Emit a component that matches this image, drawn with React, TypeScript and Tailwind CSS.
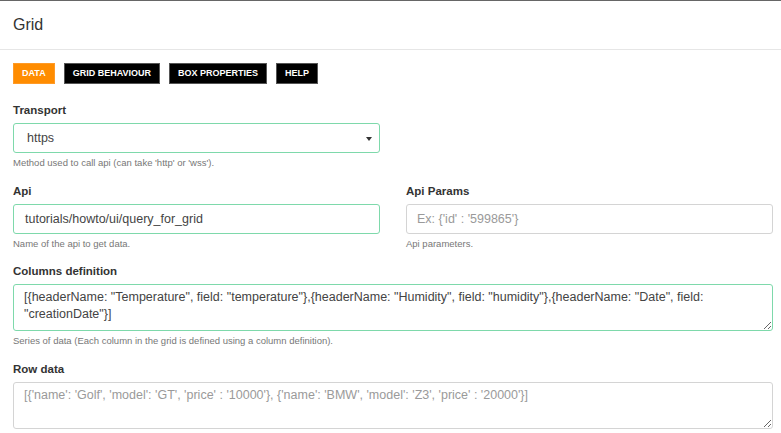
import React from "react";

const font = { fontFamily: '"Liberation Sans", Arial, sans-serif' };

function Label({ children }: { children: React.ReactNode }) {
  return <div className="text-[11.5px] leading-[16px] font-bold text-[#333] mb-[5px]">{children}</div>;
}

function Help({ children }: { children: React.ReactNode }) {
  return <div className="text-[9.5px] leading-[12px] text-[#777] mt-[4px]">{children}</div>;
}

export default function App() {
  const tabs = [
    { name: "DATA", active: true },
    { name: "GRID BEHAVIOUR" },
    { name: "BOX PROPERTIES" },
    { name: "HELP" },
  ];
  return (
    <div className="w-[781px] h-[433px] bg-white overflow-hidden border-t border-[#666]" style={font}>
      <div className="h-[49px] flex items-center px-[13px] border-b border-[#e6e6e6]">
        <span className="text-[16px] text-[#333]">Grid</span>
      </div>
      <div className="px-[13px] pt-[13px]">
        <div className="flex gap-[9px]">
          {tabs.map((t) => (
            <div
              key={t.name}
              className={
                "h-[21px] px-[8px] flex items-center text-[9px] font-bold text-white border " +
                (t.active ? "bg-[#ff8c00] border-[#ff9a26]" : "bg-black border-[#555]")
              }
            >
              {t.name}
            </div>
          ))}
        </div>

        <div className="mt-[18px] w-[367px]">
          <Label>Transport</Label>
          <div className="relative h-[30px] rounded-[3px] border border-[#7ed9ab] flex items-center pl-[13px] text-[12.5px] text-[#444]">
            https
            <svg className="absolute right-[7px] top-[13px]" width="6" height="4" viewBox="0 0 6 4">
              <path d="M0 0 L6 0 L3 4 Z" fill="#333" />
            </svg>
          </div>
          <Help>Method used to call api (can take 'http' or 'wss').</Help>
        </div>

        <div className="mt-[14px] grid grid-cols-[367px_367px] gap-x-[26px]">
          <div>
            <Label>Api</Label>
            <div className="h-[30px] rounded-[3px] border border-[#7ed9ab] flex items-center pl-[11px] text-[12.5px] text-[#444]">
              tutorials/howto/ui/query_for_grid
            </div>
            <Help>Name of the api to get data.</Help>
          </div>
          <div>
            <Label>Api Params</Label>
            <div className="h-[30px] rounded-[3px] border border-[#d4d4d4] flex items-center pl-[10px] text-[12.5px] text-[#9a9a9a]">
              Ex: {"{'id' : '599865'}"}
            </div>
            <Help>Api parameters.</Help>
          </div>
        </div>

        <div className="mt-[13px] w-[760px]">
          <Label>Columns definition</Label>
          <textarea
            readOnly
            className="block w-full h-[47px] rounded-[3px] border border-[#7ed9ab] px-[10px] pt-[4px] text-[12.5px] leading-[17px] text-[#444] outline-none resize-y"
            style={font}
            value={'[{headerName: "Temperature", field: "temperature"},{headerName: "Humidity", field: "humidity"},{headerName: "Date", field: "creationDate"}]'}
          />
          <Help>Series of data (Each column in the grid is defined using a column definition).</Help>
        </div>

        <div className="mt-[14px] w-[760px]">
          <Label>Row data</Label>
          <textarea
            readOnly
            className="block w-full h-[47px] rounded-[3px] border border-[#d4d4d4] px-[10px] pt-[4px] text-[12.5px] leading-[17px] text-[#444] placeholder:text-[#9a9a9a] outline-none resize-y"
            style={font}
            placeholder="[{'name': 'Golf', 'model': 'GT', 'price' : '10000'}, {'name': 'BMW', 'model': 'Z3', 'price' : '20000'}]"
          />
        </div>
      </div>
    </div>
  );
}
